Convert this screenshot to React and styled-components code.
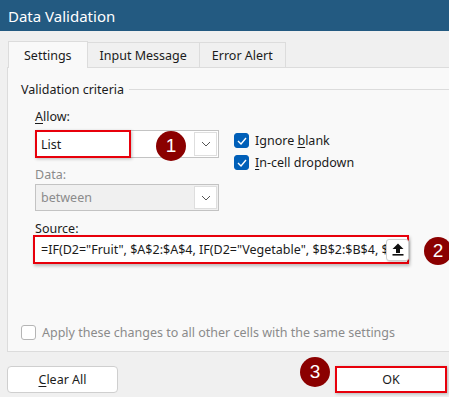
import React from 'react';
import styled, { createGlobalStyle } from 'styled-components';

const GlobalStyle = createGlobalStyle`
  html, body {
    margin: 0;
    padding: 0;
    background: #f0f0f0;
    overflow: hidden;
  }
  body {
    font-family: "Noto Sans", "Open Sans", sans-serif;
    font-size: 12px;
    color: #1b1b1b;
  }
`;

const Dialog = styled.div`
  width: 449px;
  height: 397px;
  background: #f0f0f0;
  display: flex;
  flex-direction: column;
  overflow: hidden;
`;

const TitleBar = styled.div`
  height: 31px;
  background: #235a81;
  color: #fff;
  font-size: 15px;
  display: flex;
  align-items: center;
  padding-left: 8px;
`;

const Body = styled.div`
  padding: 9px 0 0 7px;
  display: flex;
  flex-direction: column;
`;

const Tabs = styled.div`
  display: flex;
  align-items: flex-end;
  padding-left: 1px;
  height: 27px;
`;

const Tab = styled.div`
  height: ${p => (p.active ? '27px' : '25px')};
  box-sizing: border-box;
  padding: 0 ${p => p.pad}px;
  display: flex;
  align-items: center;
  font-size: 12.5px;
  background: ${p => (p.active ? '#f9f9f9' : '#f0f0f0')};
  border: 1px solid #dcdcdc;
  border-bottom: none;
  border-left: ${p => (p.first ? '1px solid #dcdcdc' : 'none')};
  margin-bottom: ${p => (p.active ? '-1px' : '0')};
  position: relative;
  z-index: ${p => (p.active ? 1 : 0)};
`;

const Panel = styled.div`
  height: 285px;
  box-sizing: border-box;
  background: #f9f9f9;
  border: 1px solid #dcdcdc;
  border-right: none;
  display: flex;
  flex-direction: column;
  padding: 13px 0 0 13px;
`;

const GroupHead = styled.div`
  display: flex;
  align-items: center;
  gap: 5px;
  height: 16px;
  font-size: 12.5px;
  &::after {
    content: '';
    flex: 1;
    height: 1px;
    background: #dcdcdc;
  }
`;

const Criteria = styled.div`
  padding-left: 14px;
  display: flex;
  flex-direction: column;
`;

const Label = styled.div`
  height: 16px;
  line-height: 16px;
  font-size: 12.5px;
  color: ${p => (p.disabled ? '#8b8b8b' : '#1b1b1b')};
  margin-top: ${p => p.top || 0}px;
  margin-bottom: ${p => p.bottom || 0}px;
`;

const Row = styled.div`
  display: flex;
  align-items: flex-start;
  gap: 15px;
`;

const Column = styled.div`
  display: flex;
  flex-direction: column;
`;

const Combo = styled.div`
  position: relative;
  width: 184px;
  height: ${p => p.h}px;
  box-sizing: border-box;
  border: 1px solid #c3c3c3;
  background: ${p => (p.disabled ? '#f0f0f0' : '#ffffff')};
  display: flex;
  align-items: center;
  font-size: 12.5px;
  color: ${p => (p.disabled ? '#8b8b8b' : '#1b1b1b')};
`;

const ComboValue = styled.div`
  flex: 1;
  padding-left: 5px;
`;

const DropButton = styled.div`
  width: 21px;
  align-self: stretch;
  margin: 1px;
  background: #fff;
  border: 1px solid #dedede;
  display: flex;
  align-items: center;
  justify-content: center;
`;

const Highlight = styled.div`
  position: absolute;
  left: -1px;
  top: -1px;
  width: ${p => p.w}px;
  height: ${p => p.h}px;
  box-sizing: border-box;
  border: 2px solid #e8000b;
  box-shadow: 1px 1px 3px rgba(0, 0, 0, 0.25);
  pointer-events: none;
`;

const Badge = styled.div`
  position: absolute;
  left: ${p => p.x - p.size / 2}px;
  top: ${p => p.y - p.size / 2}px;
  width: ${p => p.size}px;
  height: ${p => p.size}px;
  border-radius: 50%;
  background: #8b0000;
  color: #fff;
  font-family: "Liberation Sans", Arial, sans-serif;
  font-size: 19px;
  display: flex;
  align-items: center;
  justify-content: center;
  z-index: 5;
`;

const Checks = styled.div`
  display: flex;
  flex-direction: column;
  gap: 7px;
  padding-top: 3px;
`;

const CheckRow = styled.label`
  display: flex;
  align-items: center;
  gap: 6px;
  height: 15px;
  font-size: 12.5px;
  color: ${p => (p.disabled ? '#8b8b8b' : '#1b1b1b')};
`;

const Box = styled.span`
  width: 15px;
  height: 15px;
  box-sizing: border-box;
  border-radius: 3px;
  background: ${p => (p.checked ? '#005fb8' : '#ffffff')};
  border: 1px solid ${p => (p.checked ? '#005fb8' : '#b5b5b5')};
  display: flex;
  align-items: center;
  justify-content: center;
`;

const SourceField = styled.div`
  width: 376px;
  height: 29px;
  margin-left: -2px;
  box-sizing: border-box;
  border: 2px solid #e8000b;
  background: #fff;
  box-shadow: 1px 2px 3px rgba(0, 0, 0, 0.25);
  display: flex;
  align-items: center;
  font-size: 12.5px;
  position: relative;
`;

const SourceText = styled.div`
  flex: 1;
  overflow: hidden;
  white-space: nowrap;
  padding-left: 6px;
  width: 0;
`;

const RefButton = styled.div`
  width: 23px;
  height: 22px;
  box-sizing: border-box;
  margin-right: -2px;
  border: 1px solid #cfcfcf;
  border-radius: 3px;
  background: #fff;
  box-shadow: 1px 1px 2px rgba(0, 0, 0, 0.2);
  display: flex;
  align-items: center;
  justify-content: center;
`;

const Spacer = styled.div`
  flex: 1;
`;

const ApplyRow = styled(CheckRow)`
  margin-bottom: 11px;
  gap: 6px;
`;

const Footer = styled.div`
  display: flex;
  justify-content: space-between;
  padding: 14px 2px 0 7px;
`;

const Button = styled.div`
  position: relative;
  width: ${p => p.w}px;
  height: 27px;
  box-sizing: border-box;
  background: #fff;
  border: ${p => (p.marked ? '2px solid #e8000b' : '1px solid #cfcfcf')};
  border-radius: ${p => (p.marked ? '0' : '4px')};
  box-shadow: ${p => (p.marked ? '1px 1px 3px rgba(0,0,0,0.25)' : 'none')};
  display: flex;
  align-items: center;
  justify-content: center;
  font-size: 12.5px;
`;

const Key = styled.span`
  text-decoration: underline;
  text-underline-offset: 2px;
`;

const Chevron = () => (
  <svg width="10" height="6" viewBox="0 0 10 6">
    <path d="M1 1 L5 5 L9 1" fill="none" stroke="#555" strokeWidth="1" />
  </svg>
);

const Tick = () => (
  <svg width="10" height="8" viewBox="0 0 10 8">
    <path d="M1 4 L4 7 L9 1" fill="none" stroke="#fff" strokeWidth="1.4" />
  </svg>
);

const UploadIcon = () => (
  <svg width="12" height="13" viewBox="0 0 12 13">
    <path d="M6 0.5 L11.5 6 L8 6 L8 10 L4 10 L4 6 L0.5 6 Z" fill="#111" />
    <rect x="0.5" y="11" width="11" height="1.6" fill="#111" />
  </svg>
);

export default function App() {
  return (
    <Dialog>
      <GlobalStyle />
      <TitleBar>Data Validation</TitleBar>
      <Body>
        <Tabs>
          <Tab active first pad={15}>Settings</Tab>
          <Tab pad={12}>Input Message</Tab>
          <Tab pad={12}>Error Alert</Tab>
        </Tabs>
        <Panel>
          <GroupHead>Validation criteria</GroupHead>
          <Criteria>
            <Label top={12} bottom={5}><Key>A</Key>llow:</Label>
            <Row>
              <Column>
                <Combo h={28}>
                  <ComboValue>List</ComboValue>
                  <DropButton><Chevron /></DropButton>
                  <Highlight w={96} h={28} />
                  <Badge x={135} y={15} size={30}>1</Badge>
                </Combo>
                <Label disabled top={9} bottom={1}>Data:</Label>
                <Combo h={27} disabled>
                  <ComboValue>between</ComboValue>
                  <DropButton><Chevron /></DropButton>
                </Combo>
              </Column>
              <Checks>
                <CheckRow>
                  <Box checked><Tick /></Box>
                  <span>Ignore <Key>b</Key>lank</span>
                </CheckRow>
                <CheckRow>
                  <Box checked><Tick /></Box>
                  <span><Key>I</Key>n-cell dropdown</span>
                </CheckRow>
              </Checks>
            </Row>
            <Label top={10} bottom={-2}><Key>S</Key>ource:</Label>
            <SourceField>
              <SourceText>=IF(D2="Fruit", $A$2:$A$4, IF(D2="Vegetable", $B$2:$B$4, $C$2:$C$4))</SourceText>
              <RefButton><UploadIcon /></RefButton>
              <Badge x={403} y={14} size={28}>2</Badge>
            </SourceField>
          </Criteria>
          <Spacer />
          <ApplyRow disabled>
            <Box />
            <span>Apply these changes to all other cells with the same settings</span>
          </ApplyRow>
        </Panel>
      </Body>
      <Footer>
        <Button w={111}><span><Key>C</Key>lear All</span></Button>
        <Button w={112} marked>
          OK
          <Badge x={-22} y={4} size={30}>3</Badge>
        </Button>
      </Footer>
    </Dialog>
  );
}
